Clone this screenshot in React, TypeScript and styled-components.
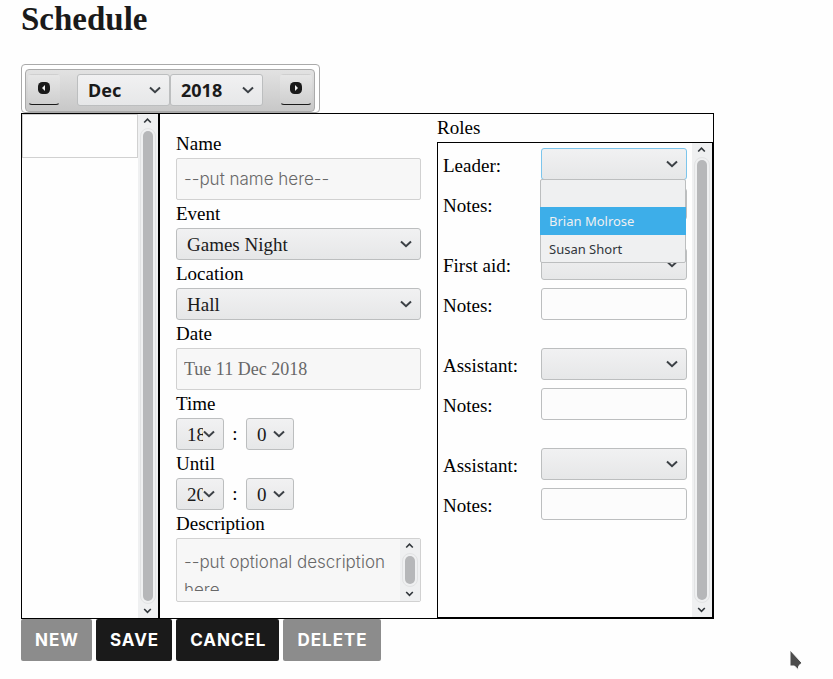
import React from "react";
import styled, { createGlobalStyle, css } from "styled-components";

const serif = `"Liberation Serif", serif`;
const sans = `Inter, "Open Sans", sans-serif`;
const ui = `"Noto Sans", "Open Sans", sans-serif`;

const Global = createGlobalStyle`
  *, *::before, *::after { box-sizing: border-box; }
  body { margin: 0; background: #fefefe; color: #000; font-family: ${serif}; font-size: 19px; line-height: 20px; }
`;

const Page = styled.main`
  padding: 0 21px 16px;
`;

const Title = styled.h1`
  margin: 0 0 26px;
  font-size: 33px;
  line-height: 38px;
  font-weight: 700;
  color: #1a1a1a;
`;

const DatePicker = styled.section`
  width: fit-content;
  padding: 4px 4px 0 3px;
  border: 1px solid #aaa;
  border-radius: 4px;
  background: #fff;
`;

const PickerBar = styled.div`
  display: flex;
  align-items: flex-start;
  gap: 17px;
  padding: 4px 2px 5px;
  border: 1px solid #aaa;
  border-radius: 4px;
  background: linear-gradient(#e2e2e2, #c8c8c8);
`;

const PickerSelects = styled.div`
  display: flex;
`;

const StepButton = styled.button`
  display: grid;
  place-items: center;
  width: 32px;
  height: 31px;
  margin: 0;
  padding: 0 0 4px;
  border: 1px solid transparent;
  border-bottom-color: #1a1a1a;
  border-radius: 4px;
  background: linear-gradient(#e6e6e6, #cfcfcf);
`;

const Panel = styled.section`
  display: grid;
  grid-template-columns: 138px minmax(0, 1fr) 276px;
  max-width: 693px;
  border: 1px solid #000;
`;

const ListPane = styled.div`
  display: flex;
  border-right: 2px solid #000;
`;

const EventList = styled.ul`
  flex: 1;
  margin: 0;
  padding: 0;
  list-style: none;
`;

const EventItem = styled.li`
  height: 44px;
  border: 1px solid #d1d1d1;
`;

const Track = styled.div`
  display: flex;
  flex-direction: column;
  align-items: center;
  width: 20px;
  flex: none;
  padding: 3px 0;
  background: #eff0f1;
`;

const Thumb = styled.div`
  flex: 1;
  width: 10px;
  margin: 6px 0;
  border-radius: 5px;
  background: #b6b7b9;
  outline: 1px solid #e2e3e4;
  outline-offset: 2px;
`;

const Form = styled.form`
  display: flex;
  flex-direction: column;
  gap: 4px;
  padding: 20px 16px 16px;
`;

const Field = styled.div`
  display: flex;
  flex-direction: column;
  gap: 4px;
`;

const fieldBox = css`
  border: 1px solid #d1d1d1;
  border-radius: 2px;
  background: #f7f7f7;
`;

const TextInput = styled.input<{ $serif?: boolean }>`
  ${fieldBox}
  width: 100%;
  height: 42px;
  margin: 0;
  padding: 0 7px;
  font-family: ${(p) => (p.$serif ? serif : sans)};
  font-size: ${(p) => (p.$serif ? 18 : 17)}px;
  font-weight: ${(p) => (p.$serif ? 400 : 300)};
  color: #686868;
  &::placeholder { color: #686868; opacity: 1; }
`;

const DescriptionBox = styled.div`
  ${fieldBox}
  display: flex;
  height: 64px;
`;

const DescriptionInput = styled.textarea`
  flex: 1;
  min-width: 0;
  height: 43px;
  margin: 9px 0 0;
  padding: 0 0 0 7px;
  border: 0;
  background: none;
  resize: none;
  overflow: hidden;
  font-family: ${sans};
  font-size: 17px;
  font-weight: 300;
  line-height: 28px;
  &::placeholder { color: #686868; opacity: 1; }
`;

const SelectWrap = styled.div<{ $width?: number }>`
  position: relative;
  width: ${(p) => (p.$width ? `${p.$width}px` : "100%")};
`;

const SelectBox = styled.select<{ $bold?: boolean; $open?: boolean }>`
  appearance: none;
  display: block;
  width: 100%;
  height: 32px;
  margin: 0;
  padding: 0 20px 0 10px;
  border: 1px solid ${(p) => (p.$open ? "#7cc5ec" : "#bcbebf")};
  border-radius: 3px;
  background: linear-gradient(#f1f1f2, #e6e7e8);
  color: #1a1a1a;
  font-family: ${(p) => (p.$bold ? ui : serif)};
  font-size: ${(p) => (p.$bold ? 18 : 19)}px;
  font-weight: ${(p) => (p.$bold ? 700 : 400)};
`;

const SelectArrow = styled.svg`
  position: absolute;
  right: 9px;
  top: 12px;
  pointer-events: none;
`;

const TimeRow = styled.div`
  display: flex;
  align-items: center;
`;

const Colon = styled.span`
  width: 22px;
  text-align: center;
`;

const RolesPane = styled.div`
  display: flex;
  flex-direction: column;
`;

const RolesTitle = styled.h2`
  margin: 0;
  font-size: 19px;
  line-height: 28px;
  font-weight: 400;
`;

const RolesBox = styled.div`
  display: flex;
  flex: 1;
  border: 1px solid #000;
`;

const RoleList = styled.div`
  display: flex;
  flex-direction: column;
  flex: 1;
  gap: 28px;
  padding: 5px;
`;

const RoleGroup = styled.div`
  display: grid;
  grid-template-columns: minmax(0, 1fr) 146px;
  row-gap: 8px;
`;

const RoleLabel = styled.label`
  padding-top: 4px;
  line-height: 28px;
`;

const NotesInput = styled.input`
  width: 100%;
  height: 32px;
  margin: 0;
  padding: 0 8px;
  border: 1px solid #bcbebf;
  border-radius: 3px;
  background: #fcfcfc;
  font-family: ${serif};
  font-size: 19px;
`;

const Popup = styled.ul`
  position: absolute;
  z-index: 1;
  top: 31px;
  left: -1px;
  width: 100%;
  margin: 0;
  padding: 0;
  list-style: none;
  border: 1px solid #bcbebf;
  border-radius: 2px;
  background: #eff0f1;
`;

const PopupOption = styled.li<{ $active?: boolean }>`
  height: 28px;
  margin: 0 -1px;
  padding: 0 9px;
  font-family: ${ui};
  font-size: 13px;
  line-height: 28px;
  color: ${(p) => (p.$active ? "#eff0f1" : "#31363b")};
  background: ${(p) => (p.$active ? "#3daee9" : "transparent")};
  &:first-child { height: 27px; }
  &:last-child { height: 27px; }
`;

const Actions = styled.div`
  display: flex;
  flex-wrap: wrap;
  gap: 4px;
`;

const ActionButton = styled.button`
  height: 42px;
  margin: 0;
  padding: 0 13px 0 14px;
  border: 0;
  border-radius: 2px;
  background: #1a1a1a;
  color: #fff;
  font-family: ${sans};
  font-size: 17px;
  font-weight: 700;
  letter-spacing: 1px;
  text-transform: uppercase;
  &:disabled { background: #8c8c8c; }
`;

const Pointer = styled.svg`
  position: absolute;
  left: 787px;
  top: 648px;
  pointer-events: none;
`;

function Arrow({ up }: { up?: boolean }) {
  return (
    <svg width="10" height="8" viewBox="0 0 10 8" fill="none" stroke="#31363b" strokeWidth="1.6" aria-hidden="true">
      <path d={up ? "M1.200 5.500 4.500 2.200 7.800 5.500" : "M1.200 2 4.500 5.300 7.800 2"} />
    </svg>
  );
}

function Scrollbar() {
  return (
    <Track aria-hidden="true">
      <Arrow up />
      <Thumb />
      <Arrow />
    </Track>
  );
}

type SelectProps = {
  id?: string;
  label?: string;
  options: string[];
  width?: number;
  bold?: boolean;
  open?: boolean;
  children?: React.ReactNode;
};

function Select({ id, label, options, width, bold, open, children }: SelectProps) {
  return (
    <SelectWrap $width={width}>
      <SelectBox id={id} aria-label={label} $bold={bold} $open={open}>
        {options.map((o) => (
          <option key={o}>{o}</option>
        ))}
      </SelectBox>
      <SelectArrow width="12" height="8" viewBox="0 0 12 8" fill="none" stroke="#3b4045" strokeWidth="2" aria-hidden="true">
        <path d="M1 1.500 6 6.200 11 1.500" />
      </SelectArrow>
      {children}
    </SelectWrap>
  );
}

function StepIcon({ next }: { next?: boolean }) {
  return (
    <svg width="12" height="12" viewBox="0 0 12 12" aria-hidden="true">
      <rect width="12" height="12" rx="4.500" fill="#1a1a1a" />
      <path d={next ? "M5 3v6l3-3z" : "M7 3v6L4 6z"} fill="#f2f2f2" />
    </svg>
  );
}

const people = ["", "Brian Molrose", "Susan Short"];
const roles = ["Leader", "First aid", "Assistant", "Assistant"];

export default function App() {
  return (
    <>
      <Global />
      <Page>
        <Title>Schedule</Title>
        <DatePicker aria-label="Month">
          <PickerBar>
            <StepButton type="button" aria-label="Previous month">
              <StepIcon />
            </StepButton>
            <PickerSelects>
              <Select label="Month" options={["Dec"]} width={93} bold />
              <Select label="Year" options={["2018"]} width={93} bold />
            </PickerSelects>
            <StepButton type="button" aria-label="Next month">
              <StepIcon next />
            </StepButton>
          </PickerBar>
        </DatePicker>

        <Panel>
          <ListPane>
            <EventList>
              <EventItem />
            </EventList>
            <Scrollbar />
          </ListPane>

          <Form onSubmit={(e) => e.preventDefault()}>
            <Field>
              <label htmlFor="name">Name</label>
              <TextInput id="name" placeholder="--put name here--" />
            </Field>
            <Field>
              <label htmlFor="event">Event</label>
              <Select id="event" options={["Games Night"]} />
            </Field>
            <Field>
              <label htmlFor="location">Location</label>
              <Select id="location" options={["Hall"]} />
            </Field>
            <Field>
              <label htmlFor="date">Date</label>
              <TextInput id="date" defaultValue="Tue 11 Dec 2018" $serif />
            </Field>
            <Field>
              <label htmlFor="time">Time</label>
              <TimeRow>
                <Select id="time" options={["18"]} width={48} />
                <Colon>:</Colon>
                <Select label="Time minutes" options={["0"]} width={48} />
              </TimeRow>
            </Field>
            <Field>
              <label htmlFor="until">Until</label>
              <TimeRow>
                <Select id="until" options={["20"]} width={48} />
                <Colon>:</Colon>
                <Select label="Until minutes" options={["0"]} width={48} />
              </TimeRow>
            </Field>
            <Field>
              <label htmlFor="description">Description</label>
              <DescriptionBox>
                <DescriptionInput id="description" placeholder="--put optional description here" />
                <Scrollbar />
              </DescriptionBox>
            </Field>
          </Form>

          <RolesPane>
            <RolesTitle>Roles</RolesTitle>
            <RolesBox>
              <RoleList>
                {roles.map((role, i) => (
                  <RoleGroup key={i}>
                    <RoleLabel htmlFor={`role-${i}`}>{role}:</RoleLabel>
                    <Select id={`role-${i}`} options={people} open={i === 0}>
                      {i === 0 && (
                        <Popup role="listbox" aria-label="Leader options">
                          {people.map((person) => (
                            <PopupOption
                              key={person}
                              role="option"
                              aria-selected={person === "Brian Molrose"}
                              $active={person === "Brian Molrose"}
                            >
                              {person}
                            </PopupOption>
                          ))}
                        </Popup>
                      )}
                    </Select>
                    <RoleLabel htmlFor={`notes-${i}`}>Notes:</RoleLabel>
                    <NotesInput id={`notes-${i}`} />
                  </RoleGroup>
                ))}
              </RoleList>
              <Scrollbar />
            </RolesBox>
          </RolesPane>
        </Panel>

        <Actions>
          <ActionButton type="button" disabled>New</ActionButton>
          <ActionButton type="button">Save</ActionButton>
          <ActionButton type="button">Cancel</ActionButton>
          <ActionButton type="button" disabled>Delete</ActionButton>
        </Actions>
      </Page>
      <Pointer width="18" height="24" viewBox="0 0 18 24" aria-hidden="true">
        <path d="M3 2v16h4.500l3.500 3.500 1-4 3-2.500z" fill="#4d4d4d" stroke="#fff" strokeWidth="1" />
      </Pointer>
    </>
  );
}
